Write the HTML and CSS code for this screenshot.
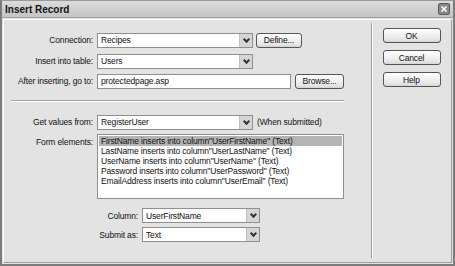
FILE: index.html
```html
<!DOCTYPE html>
<html lang="en">
<head>
  <meta charset="UTF-8" />
  <title>Insert Record</title>
  <link rel="stylesheet" href="styles.css">
</head>
<body>
  <div class="dialog">
    <div class="titlebar">
      <span class="title">Insert Record</span>
      <span class="close">
        <svg width="10" height="10" viewBox="0 0 10 10">
          <path d="M2.5 2.5 L7.5 7.5 M7.5 2.5 L2.5 7.5" stroke="#fff" stroke-width="1.6" />
        </svg>
      </span>
    </div>

    <div class="frame">
      <div class="main">
        <div class="row">
          <label class="lbl">Connection:</label>
          <div class="select w155"><span>Recipes</span><i class="arrow"></i></div>
          <button class="btn define">Define...</button>
        </div>
        <div class="row r2">
          <label class="lbl">Insert into table:</label>
          <div class="select w155"><span>Users</span><i class="arrow"></i></div>
        </div>
        <div class="row">
          <label class="lbl">After inserting, go to:</label>
          <div class="textbox">protectedpage.asp</div>
          <button class="btn browse">Browse...</button>
        </div>

        <div class="sep"></div>

        <div class="row getvals">
          <label class="lbl">Get values from:</label>
          <div class="select w155"><span>RegisterUser</span><i class="arrow"></i></div>
          <span class="note">(When submitted)</span>
        </div>

        <div class="row formels">
          <label class="lbl">Form elements:</label>
          <ul class="listbox">
            <li class="sel">FirstName inserts into column"UserFirstName" (Text)</li>
            <li>LastName inserts into column"UserLastName" (Text)</li>
            <li>UserName inserts into column"UserName" (Text)</li>
            <li>Password inserts into column"UserPassword" (Text)</li>
            <li>EmailAddress inserts into column"UserEmail" (Text)</li>
          </ul>
        </div>

        <div class="subrow first">
          <label class="sublbl">Column:</label>
          <div class="select w117"><span>UserFirstName</span><i class="arrow"></i></div>
        </div>
        <div class="subrow">
          <label class="sublbl">Submit as:</label>
          <div class="select w117"><span>Text</span><i class="arrow"></i></div>
        </div>
      </div>

      <div class="side">
        <button class="btn big">OK</button>
        <button class="btn big">Cancel</button>
        <button class="btn big">Help</button>
      </div>
    </div>
  </div>
</body>
</html>
```

FILE: styles.css
```css
body {
  margin: 0;
  font-family: "Liberation Sans", Arial, sans-serif;
  font-size: 8.5px;
  letter-spacing: -0.15px;
  color: #111;
}

.dialog {
  width: 455px;
  height: 266px;
  box-sizing: border-box;
  background-color: #e3e3e3;
  border: 2px solid #7c7c7c;
  border-top: 1px solid #9a9a9a;
  display: flex;
  flex-direction: column;
}

.titlebar {
  height: 16px;
  flex: none;
  display: flex;
  align-items: center;
  justify-content: space-between;
  padding: 0 3px 0 3px;
  background: linear-gradient(#dcdcdc, #c4c4c4);
  border-bottom: 1px solid #9c9c9c;
}

.title {
  font-weight: bold;
  font-size: 10px;
  letter-spacing: 0;
  color: #111;
}

.close {
  width: 10px;
  height: 10px;
  background-color: #8a8a8a;
  border: 1px solid #5a5a5a;
  border-radius: 2px;
  display: flex;
}

.frame {
  flex: 1;
  margin: 1px;
  border-top: 1px solid #ffffff;
  border-left: 1px solid #ffffff;
  border-right: 1px solid #9c9c9c;
  border-bottom: 1px solid #9c9c9c;
  display: flex;
}

.main {
  width: 367px;
  padding-top: 10px;
}

.row {
  display: flex;
  align-items: center;
  height: 20px;
}

.r2 {
  margin-top: 1px;
}

.lbl {
  width: 89px;
  text-align: right;
  margin-right: 4px;
  flex: none;
  white-space: nowrap;
}

.select {
  height: 15px;
  box-sizing: border-box;
  border: 1px solid #8e8e8e;
  background-color: #fff;
  display: flex;
  align-items: center;
  padding-left: 3px;
}

.select span {
  flex: 1;
}

.w155 {
  width: 156px;
}

.w117 {
  width: 118px;
}

.arrow {
  width: 12px;
  height: 13px;
  background-color: #d6d6d6;
  border-left: 1px solid #c0c0c0;
  position: relative;
}

.arrow::after {
  content: "";
  position: absolute;
  left: 4px;
  top: 3px;
  width: 3px;
  height: 3px;
  border-right: 2px solid #333;
  border-bottom: 2px solid #333;
  transform: rotate(45deg);
}

.textbox {
  width: 194px;
  height: 15px;
  box-sizing: border-box;
  border: 1px solid #8e8e8e;
  background-color: #fff;
  padding-left: 3px;
  line-height: 13px;
}

.btn {
  font-family: "Liberation Sans", Arial, sans-serif;
  font-size: 8.5px;
  letter-spacing: -0.15px;
  color: #111;
  height: 15px;
  box-sizing: border-box;
  border: 1px solid #555;
  border-radius: 3px;
  background: linear-gradient(#ffffff, #e6e6e6 80%, #d4d4d4);
  padding: 0;
}

.define {
  width: 46px;
  margin-left: 3px;
}

.browse {
  width: 49px;
  margin-left: 4px;
}

.big {
  width: 58px;
}

.sep {
  margin: 9px 0 0 7px;
  width: 333px;
  border-top: 1px solid #a2a2a2;
  border-bottom: 1px solid #ffffff;
}

.getvals {
  margin-top: 10px;
}

.note {
  margin-left: 4px;
}

.formels {
  height: auto;
  align-items: flex-start;
  margin-top: 2px;
}

.formels .lbl {
  margin-top: 3px;
}

.listbox {
  list-style: none;
  margin: 0;
  padding: 1px 1px 0;
  width: 247px;
  height: 65px;
  box-sizing: border-box;
  border: 1px solid #8e8e8e;
  background-color: #fff;
}

.listbox li {
  height: 10px;
  line-height: 10px;
  padding-left: 2px;
  white-space: nowrap;
}

.listbox li.sel {
  background-color: #b4b4b4;
}

.subrow {
  display: flex;
  align-items: center;
  height: 19px;
  padding-left: 93px;
}

.subrow.first {
  margin-top: 7px;
}

.sublbl {
  width: 41px;
  text-align: right;
  margin-right: 4px;
  white-space: nowrap;
}

.side {
  flex: 1;
  margin: 3px 0 4px;
  border-left: 1px solid #a2a2a2;
  box-shadow: inset 1px 0 #ffffff;
  display: flex;
  flex-direction: column;
  align-items: center;
  padding-top: 5px;
  gap: 7px;
}
```
